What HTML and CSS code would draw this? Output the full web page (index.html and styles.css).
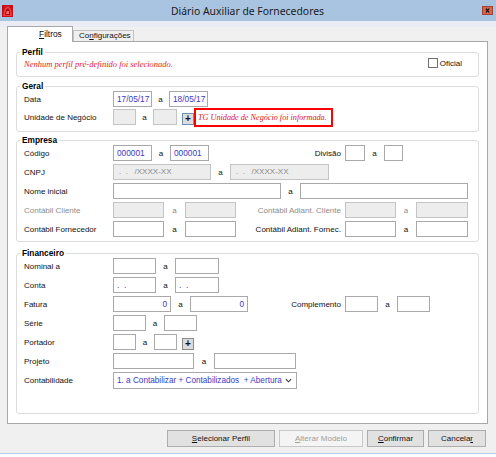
FILE: index.html
```html
<!DOCTYPE html>
<html lang="pt">
<head>
    <meta charset="UTF-8">
    <title>Diário Auxiliar de Fornecedores</title>
    <link rel="stylesheet" href="styles.css">
</head>
<body>
    <div class="window">
        <div class="titlebar">
            <svg class="app-icon" viewBox="0 0 11 12">
                <rect width="11" height="12" fill="#c8101a"/>
                <path d="M1 11 L3 3 L6 1 L9 4 L10 11 Z" fill="#ee3a3a"/>
                <path d="M3 10 L4 5 L6 3 L8 6 L8 10 Z" fill="#a50a12"/>
                <path d="M4 9 L5 6 L7 6 L7 9 Z" fill="#ff6a6a"/>
            </svg>
            <span class="title">Diário Auxiliar de Fornecedores</span>
            <span class="close">
                <svg viewBox="0 0 10 9"><path d="M3 2 L7 7 M7 2 L3 7" stroke="#111" stroke-width="1.6"/></svg>
            </span>
        </div>

        <div class="tabs">
            <span class="tab active"><u>F</u>iltros</span>
            <span class="tab">Co<u>n</u>figurações</span>
        </div>

        <div class="panel">
            <fieldset class="group perfil">
                <legend>Perfil</legend>
                <div class="perfil-row">
                    <span class="warn">Nenhum perfil pré-definido foi selecionado.</span>
                    <label class="check"><span class="box"></span>Oficial</label>
                </div>
            </fieldset>

            <fieldset class="group geral">
                <legend>Geral</legend>
                <div class="row">
                    <span class="lbl">Data</span>
                    <span class="fld val w39">17/05/17</span>
                    <span class="sep s17">a</span>
                    <span class="fld val w39">18/05/17</span>
                </div>
                <div class="row">
                    <span class="lbl">Unidade de Negócio</span>
                    <span class="fld dis w23"></span>
                    <span class="sep s17">a</span>
                    <span class="fld dis w24"></span>
                    <span class="plus focus">+</span>
                    <span class="alert">TG Unidade de Negócio foi informada.</span>
                </div>
            </fieldset>

            <fieldset class="group empresa">
                <legend>Empresa</legend>
                <div class="row">
                    <span class="lbl">Código</span>
                    <span class="left">
                        <span class="fld val w39">000001</span>
                        <span class="sep s18">a</span>
                        <span class="fld val w39">000001</span>
                    </span>
                    <span class="rlbl">Divisão</span>
                    <span class="fld w20"></span>
                    <span class="sep">a</span>
                    <span class="fld w19"></span>
                </div>
                <div class="row">
                    <span class="lbl">CNPJ</span>
                    <span class="fld dis mask w98">.&nbsp;&nbsp;.&nbsp;&nbsp;&nbsp;/XXXX-XX</span>
                    <span class="sep">a</span>
                    <span class="fld dis mask w99">.&nbsp;&nbsp;.&nbsp;&nbsp;&nbsp;/XXXX-XX</span>
                </div>
                <div class="row">
                    <span class="lbl">Nome inicial</span>
                    <span class="fld w168"></span>
                    <span class="sep">a</span>
                    <span class="fld w168"></span>
                </div>
                <div class="row">
                    <span class="lbl muted">Contábil Cliente</span>
                    <span class="left">
                        <span class="fld dis w51"></span>
                        <span class="sep s21 muted">a</span>
                        <span class="fld dis w51"></span>
                    </span>
                    <span class="rlbl muted">Contábil Adiant. Cliente</span>
                    <span class="fld dis w51"></span>
                    <span class="sep s20 muted">a</span>
                    <span class="fld dis w52"></span>
                </div>
                <div class="row">
                    <span class="lbl">Contábil Fornecedor</span>
                    <span class="left">
                        <span class="fld w51"></span>
                        <span class="sep s21">a</span>
                        <span class="fld w51"></span>
                    </span>
                    <span class="rlbl">Contábil Adiant. Fornec.</span>
                    <span class="fld w51"></span>
                    <span class="sep s20">a</span>
                    <span class="fld w52"></span>
                </div>
            </fieldset>

            <fieldset class="group financeiro">
                <legend>Financeiro</legend>
                <div class="row">
                    <span class="lbl">Nominal a</span>
                    <span class="fld w43"></span>
                    <span class="sep">a</span>
                    <span class="fld w44"></span>
                </div>
                <div class="row">
                    <span class="lbl">Conta</span>
                    <span class="fld val w43">.&nbsp;&nbsp;.</span>
                    <span class="sep">a</span>
                    <span class="fld val w44">.&nbsp;&nbsp;.</span>
                </div>
                <div class="row">
                    <span class="lbl">Fatura</span>
                    <span class="left">
                        <span class="fld val num w58">0</span>
                        <span class="sep">a</span>
                        <span class="fld val num w58">0</span>
                    </span>
                    <span class="rlbl">Complemento</span>
                    <span class="fld w33"></span>
                    <span class="sep">a</span>
                    <span class="fld w33"></span>
                </div>
                <div class="row">
                    <span class="lbl">Série</span>
                    <span class="fld w33"></span>
                    <span class="sep s18">a</span>
                    <span class="fld w33"></span>
                </div>
                <div class="row">
                    <span class="lbl">Portador</span>
                    <span class="fld w23"></span>
                    <span class="sep s18">a</span>
                    <span class="fld w23"></span>
                    <span class="plus">+</span>
                </div>
                <div class="row">
                    <span class="lbl">Projeto</span>
                    <span class="fld w81"></span>
                    <span class="sep s20">a</span>
                    <span class="fld w82"></span>
                </div>
                <div class="row tall">
                    <span class="lbl">Contabilidade</span>
                    <span class="combo">
                        <span>1. a Contabilizar + Contabilizados&nbsp; + Abertura</span>
                        <svg viewBox="0 0 8 5"><path d="M1 1 L4 4 L7 1" fill="none" stroke="#333" stroke-width="1.2"/></svg>
                    </span>
                </div>
            </fieldset>
        </div>

        <div class="actions">
            <button class="btn b-perfil"><u>S</u>elecionar Perfil</button>
            <button class="btn b-modelo" disabled><u>A</u>lterar Modelo</button>
            <button class="btn b-ok"><u>C</u>onfirmar</button>
            <button class="btn b-cancel">Cancela<u>r</u></button>
        </div>
    </div>
</body>
</html>
```

FILE: styles.css
```css
* {
    box-sizing: border-box;
}

body {
    margin: 0;
    background: #fff;
    font-family: "Liberation Sans", Arial, sans-serif;
    font-size: 8px;
    color: #111;
}

.window {
    width: 496px;
    height: 454px;
    background: #f0f0f0;
    border-bottom: 1px solid #b4cce6;
}

/* title bar */
.titlebar {
    height: 21px;
    display: flex;
    align-items: center;
    background: #a9c4e1;
}

.app-icon {
    width: 11px;
    height: 12px;
    margin-left: 2px;
}

.title {
    flex: 1;
    text-align: center;
    font-family: "Noto Sans", "Open Sans", sans-serif;
    font-size: 10.4px;
    color: #1a1a1a;
    padding-top: 1px;
}

.close {
    width: 11px;
    height: 9px;
    margin-right: 3px;
    background: #d8634c;
    border: 1px solid #9c4636;
    display: flex;
}

.close svg {
    width: 9px;
    height: 7px;
}

/* tabs */
.tabs {
    display: flex;
    align-items: flex-end;
    height: 20px;
    padding-left: 7px;
    background: linear-gradient(#ececf4 0, #ececf4 6px, #f0f0f0 6px);
}

.tab {
    height: 11px;
    line-height: 10px;
    padding: 0 2px 0 5px;
    border: 1px solid #c4c4c4;
    border-bottom: none;
    background: #efefef;
    color: #111;
}

.tab.active {
    position: relative;
    z-index: 1;
    width: 66px;
    height: 16px;
    line-height: 14px;
    margin-bottom: -1px;
    padding-left: 31px;
    background: #fff;
    border-color: #a8a8a8;
    font-size: 8.4px;
}

.panel {
    height: 383px;
    margin: 0 8px 0 7px;
    padding: 5px 8px 0 8px;
    background: #fff;
    border: 1px solid #a8a8a8;
}

/* group boxes */
.group {
    margin: 0;
    padding: 0 8px 4px 7px;
    border: 1px solid #dcdcdc;
    border-radius: 3px;
    min-width: 0;
}

.group legend {
    margin-left: -4px;
    padding: 0 2px;
    font-weight: bold;
    font-size: 8.3px;
    line-height: 10px;
    color: #000;
}

.perfil {
    padding-bottom: 5px;
}

.geral {
    margin-top: 4px;
    padding-bottom: 6px;
}

.empresa {
    margin-top: 3px;
}

.financeiro {
    margin-top: 6px;
    padding-bottom: 24px;
}

.perfil-row {
    display: flex;
    align-items: center;
    height: 14px;
}

.warn {
    flex: 1;
    color: #e8202a;
    font-family: "Liberation Serif", "Times New Roman", serif;
    font-style: italic;
    font-size: 8.5px;
}

.check {
    display: flex;
    align-items: center;
    gap: 2px;
    margin-right: 8px;
    margin-top: -2px;
}

.check .box {
    width: 10px;
    height: 10px;
    border: 1px solid #707070;
    background: #fff;
}

/* field rows */
.row {
    display: flex;
    align-items: center;
    height: 16px;
}

.geral .row + .row {
    margin-top: 2px;
}

.empresa .row + .row,
.financeiro .row + .row {
    margin-top: 3px;
}

.row.tall {
    height: 17px;
}

.lbl {
    width: 89px;
    flex: none;
}

.left {
    width: 137px;
    flex: none;
    display: flex;
    align-items: center;
}

.rlbl {
    width: 95px;
    flex: none;
    text-align: right;
    padding-right: 4px;
}

.muted {
    color: #8c8c8c;
}

.fld {
    flex: none;
    height: 16px;
    line-height: 14px;
    padding: 0 3px;
    border: 1px solid #a9a9a9;
    background: #fff;
    white-space: nowrap;
    overflow: hidden;
}

.fld.val {
    color: #3a3ac8;
    font-size: 8.3px;
}

.fld.num {
    text-align: right;
    padding-right: 3px;
}

.fld.dis {
    background: #ededed;
    border-color: #c4c4c4;
}

.fld.mask {
    color: #8a8a8a;
    padding-left: 5px;
}

.sep {
    flex: none;
    width: 19px;
    text-align: center;
}

.s17 { width: 17px; }
.s18 { width: 18px; }
.s20 { width: 20px; }
.s21 { width: 21px; }

.w19 { width: 19px; }
.w20 { width: 20px; }
.w23 { width: 23px; }
.w24 { width: 24px; }
.w33 { width: 33px; }
.w39 { width: 39px; }
.w43 { width: 43px; }
.w44 { width: 44px; }
.w51 { width: 51px; }
.w52 { width: 52px; }
.w58 { width: 58px; }
.w81 { width: 81px; }
.w82 { width: 82px; }
.w98 { width: 98px; }
.w99 { width: 99px; }
.w168 { width: 168px; }

.plus {
    flex: none;
    width: 12px;
    height: 12px;
    margin-left: 5px;
    margin-top: 3px;
    border: 1px solid #8a8a8a;
    background: #dcdcdc;
    font-weight: bold;
    font-size: 10px;
    line-height: 9px;
    text-align: center;
}

.plus.focus {
    border-color: #6d8fb4;
}

.alert {
    flex: none;
    width: 139px;
    height: 19px;
    line-height: 15px;
    padding-left: 2px;
    border: 2px solid #f00;
    color: #e8101a;
    font-family: "Liberation Serif", "Times New Roman", serif;
    font-style: italic;
    font-size: 8.2px;
    white-space: nowrap;
    overflow: hidden;
}

.combo {
    flex: none;
    width: 184px;
    height: 17px;
    display: flex;
    align-items: center;
    justify-content: space-between;
    padding: 0 4px 0 3px;
    border: 1px solid #a9a9a9;
    color: #3a3ac8;
    font-size: 8.2px;
}

.combo svg {
    width: 7px;
    height: 5px;
}

/* bottom buttons */
.actions {
    display: flex;
    justify-content: flex-end;
    gap: 4px;
    margin: 6px 10px 0 0;
}

.btn {
    height: 17px;
    padding: 0;
    border: 1px solid #adadad;
    background: #e1e1e1;
    font-family: "Liberation Sans", Arial, sans-serif;
    font-size: 8px;
    color: #111;
}

.btn:disabled {
    background: #f4f4f4;
    border-color: #c8c8c8;
    color: #a0a0a0;
}

.b-perfil { width: 108px; }
.b-modelo { width: 84px; }
.b-ok { width: 57px; }
.b-cancel { width: 58px; }
```
